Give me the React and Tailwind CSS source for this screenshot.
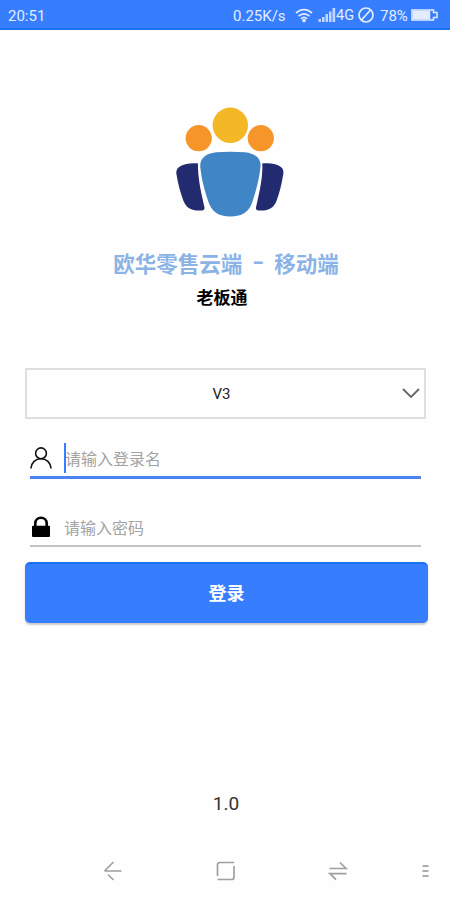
import { useState } from "react";

function StatusBar() {
  return (
    <div className="h-[30px] shrink-0 flex items-center justify-between pl-2 pr-3 bg-[#377eff] border-b-2 border-[#1c6df0] text-[#e3edff]">
      <span className="text-[15px] leading-none pt-[5px]">20:51</span>
      <div className="flex items-center pt-[2px] text-[15px] leading-none">
        <span className="w-[54px] pt-[3px] whitespace-nowrap">0.25K/s</span>
        <svg className="ml-2 w-[18px] h-[15px]" viewBox="0 0 18 15" fill="none" stroke="currentColor" strokeWidth="1.7">
          <path d="M1 5.2C5.6.4 12.4.4 17 5.2M3.6 8.1C6.6 5 11.4 5 14.4 8.1M6 10.8C7.8 9 10.2 9 12 10.8" />
          <circle cx="9" cy="12.5" r="1" fill="currentColor" />
        </svg>
        <svg className="ml-[5px] w-[18px] h-[14px]" viewBox="0 0 18 14" fill="currentColor">
          <path d="M.5 11h2.5v3h-2.5zM4 9h2.5v5h-2.5zM7.5 6h2.5v8h-2.5zM11 3.5h2.5v10.5h-2.5zM14.5 0h2.7v14h-2.7z" opacity=".8" />
        </svg>
        <span className="w-[19px] pt-[3px] whitespace-nowrap text-[14.5px]">4G</span>
        <svg className="ml-[3px] w-4 h-4" viewBox="0 0 16 16" fill="none" stroke="currentColor" strokeWidth="1.7">
          <circle cx="8" cy="8" r="7" />
          <path d="M3.5 13L12.5 3" />
        </svg>
        <span className="ml-[6px] w-[31px] pt-[3px] whitespace-nowrap">78%</span>
        <svg className="w-[27px] h-3" viewBox="0 0 27 12" fill="none" stroke="currentColor" strokeWidth="1.5">
          <path d="M1 1H22.5V3.5H26V8.5H22.5V11H1z" />
          <path d="M2.5 2.5H18.5V9.5H2.5z" fill="currentColor" />
        </svg>
      </div>
    </div>
  );
}

function Logo() {
  return (
    <svg className="ml-[165px] w-[130px] h-[130px] shrink-0" viewBox="0 0 130 130">
      <circle cx="65.3" cy="30.3" r="17.7" fill="#f4b726" />
      <circle cx="33.7" cy="43.2" r="13.1" fill="#f6962a" />
      <circle cx="95.8" cy="43.2" r="13.1" fill="#f6962a" />
      <path d="M33 68.4C25 67.8 18 69 13.5 72.5Q10.8 75 11.4 79C13 89 15.5 98 18.5 106C21.5 113.5 27 116.2 37 115.5Q39.8 115 39.5 112.5C36.5 99 33.5 87 33 73Z" fill="#232b70" />
      <path d="M97.2 68.4C105 67.8 112.5 69 116.5 72.5Q119 75 118.3 79C116.7 89 114.5 98 111.5 106C108.500 113.5 103 116.2 93.5 115.5Q90.5 115 91 112.5C94 99 97 87 97.4 73Z" fill="#232b70" />
      <path d="M51 57.2Q65.5 56.2 80 57.2C91 58.5 96.5 64 95.5 72C94.2 84 91.5 94 88 105C84.5 117 77.5 121.5 65.3 121.5C53.5 121.5 46.5 117 42.8 105C39 93 36.5 84 35.3 72C34.5 64 40 58.5 51 57.2Z" fill="#4085c6" />
    </svg>
  );
}

function UserIcon() {
  return (
    <svg className="w-[22px] h-[22px]" viewBox="0 0 22 22" fill="none" stroke="#111" strokeWidth="1.6">
      <circle cx="11" cy="6.3" r="5.4" />
      <path d="M.9 21.5C1.4 15.5 5.5 11.7 11 11.7S20.6 15.5 21.1 21.5" />
    </svg>
  );
}

function LockIcon() {
  return (
    <svg className="mt-[2px] w-[22px] h-[22px]" viewBox="0 0 22 22">
      <path d="M5.3 11V7.5C5.3 -.2 16.7 -.2 16.7 7.5V11" fill="none" stroke="#000" strokeWidth="2.6" />
      <rect x="2" y="9.8" width="18" height="11.2" rx="1" fill="#000" />
    </svg>
  );
}

function NavBar() {
  return (
    <div className="h-[60px] shrink-0 flex items-center pt-px pl-[102px] text-[#9f9f9f]">
      <svg className="w-5 h-5" viewBox="0 0 20 20" fill="none" stroke="currentColor" strokeWidth="1.6">
        <path d="M19.5 10H2.5M11.5 1L2.500 10M6 13.500L11.500 19" />
      </svg>
      <svg className="ml-[94px] w-5 h-5" viewBox="0 0 20 20" fill="none" stroke="currentColor" strokeWidth="1.7">
        <path d="M1.5 15V4Q1.5 1.5 4 1.5H18M18 5V16Q18 18.5 15.5 18.5H1.5" />
      </svg>
      <svg className="ml-[92px] w-5 h-5" viewBox="0 0 20 20" fill="none" stroke="currentColor" strokeWidth="1.7">
        <path d="M1.5 7.5H18L12 1.5M18.5 12.700H2L8 18.700" />
      </svg>
      <svg className="ml-[74px] w-2 h-[14px]" viewBox="0 0 8 14" fill="none" stroke="#adadad" strokeWidth="1.8">
        <path d="M.5 2H6.500M.5 7H6.500M.5 12H6.500" />
      </svg>
    </div>
  );
}

export default function App() {
  const [name, setName] = useState("");
  const [password, setPassword] = useState("");

  return (
    <div className="h-screen w-full max-w-[450px] flex flex-col overflow-hidden bg-[#fefefe] font-['Roboto','Noto_Sans_CJK_SC',sans-serif]">
      <StatusBar />

      <main className="flex-1 flex flex-col pt-[65px]">
        <Logo />

        <h1 className="mt-[24px] h-8 flex justify-center items-center pl-[2px] text-[21.5px] leading-8 font-bold text-[#8bb3e5]">
          <span>欧华零售云端</span>
          <span className="w-[32px] h-8 flex items-center justify-center pb-[4px]">
            <span className="scale-x-150">-</span>
          </span>
          <span>移动端</span>
        </h1>
        <h2 className="mt-[5px] h-6 pr-[6px] text-center text-[17px] leading-6 font-bold text-black">老板通</h2>

        <button className="mt-[58px] ml-[25px] w-[401px] h-[51px] shrink-0 flex items-center border-2 border-[#dedede] text-[15px] text-[#222]">
          <span className="flex-1 pl-[14px] pt-px">V3</span>
          <svg className="mr-[4px] w-[18px] h-[11px]" viewBox="0 0 18 11" fill="none" stroke="#666" strokeWidth="1.8">
            <path d="M1 1L9 9L17 1" />
          </svg>
        </button>

        <label className="mt-[20px] mx-[30px] w-[391px] h-[40px] shrink-0 flex items-center border-b-[3px] border-[#4c83f0]">
          <UserIcon />
          <span className="ml-[12px] w-[2px] h-[30px] bg-[#377eff]" />
          <input
            className="-ml-px pt-[5px] flex-1 text-[16px] text-[#333] outline-none placeholder:text-[#a3a3a3]"
            placeholder="请输入登录名"
            value={name}
            onChange={(e) => setName(e.target.value)}
          />
        </label>

        <label className="mt-[28px] mx-[30px] w-[391px] h-[40px] shrink-0 flex items-center border-b-2 border-[#c3c3c3]">
          <LockIcon />
          <input
            type="password"
            className="ml-[12px] pt-[5px] flex-1 text-[16px] text-[#333] outline-none placeholder:text-[#a3a3a3]"
            placeholder="请输入密码"
            value={password}
            onChange={(e) => setPassword(e.target.value)}
          />
        </label>

        <button className="mt-[15px] ml-[25px] w-[403px] h-[61px] shrink-0 rounded-[5px] border-t-2 border-[#1c6df0] bg-[#377eff] pb-px text-[18px] font-bold text-white shadow-[0_2px_2px_rgba(0,0,0,0.2)]">
          登录
        </button>

        <p className="mt-auto mb-[24px] pl-[2px] text-center text-[19px] leading-6 text-[#333]">1.0</p>
      </main>

      <NavBar />
    </div>
  );
}
